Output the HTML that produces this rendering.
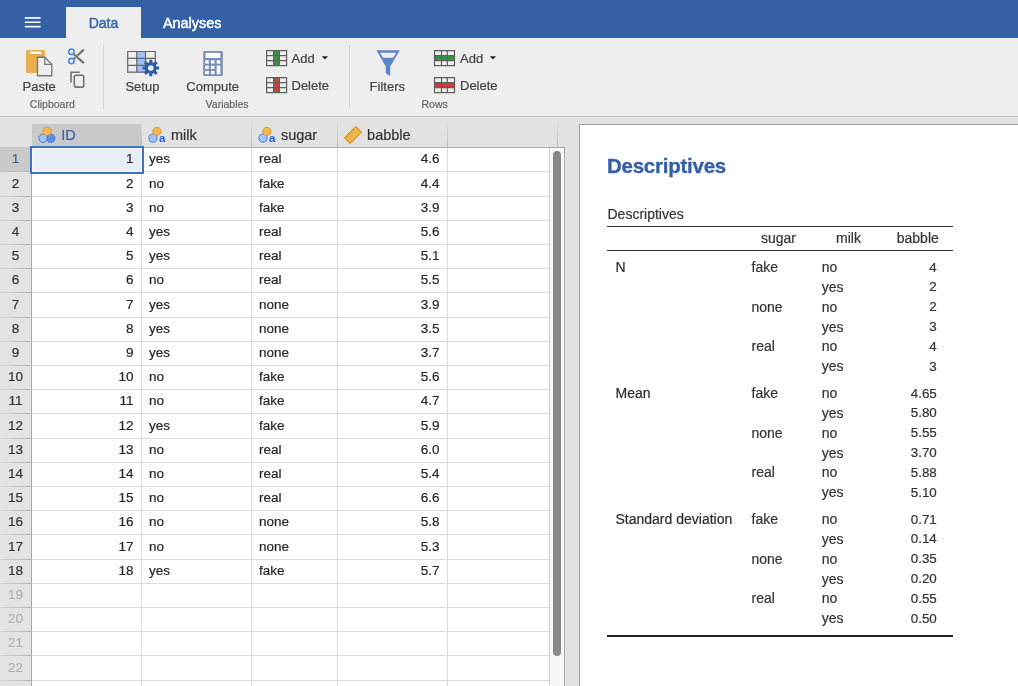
<!DOCTYPE html>
<html><head><meta charset="utf-8"><style>
html,body{margin:0;padding:0;width:1018px;height:686px;overflow:hidden;background:#e2e2e2;font-family:"Liberation Sans", sans-serif;}
.b{position:absolute;}
.t{position:absolute;line-height:1;white-space:nowrap;-webkit-text-stroke:0.2px currentColor;}
svg{position:absolute;left:0;top:0;will-change:transform;}
</style></head><body>
<div class="b" style="left:0px;top:0px;width:1018px;height:38px;background:#3461a5"></div><div class="b" style="left:66px;top:7px;width:75px;height:31px;background:#eeeeee"></div><div class="b" style="left:0px;top:38px;width:1018px;height:78px;background:#eeeeee"></div><div class="b" style="left:0px;top:116px;width:1018px;height:1px;background:#c4c4c4"></div><div class="b" style="left:0px;top:117px;width:1018px;height:569px;background:#e2e2e2"></div><div class="b" style="left:103px;top:45px;width:1px;height:64px;background:#d6d6d6"></div><div class="b" style="left:349px;top:45px;width:1px;height:64px;background:#d6d6d6"></div><div class="b" style="left:32px;top:124px;width:109px;height:23px;background:#c9c9c9"></div><div class="b" style="left:141px;top:124px;width:1px;height:23px;background:linear-gradient(to bottom, rgba(190,190,190,0.2), #b9b9b9)"></div><div class="b" style="left:251px;top:124px;width:1px;height:23px;background:linear-gradient(to bottom, rgba(190,190,190,0.2), #b9b9b9)"></div><div class="b" style="left:337px;top:124px;width:1px;height:23px;background:linear-gradient(to bottom, rgba(190,190,190,0.2), #b9b9b9)"></div><div class="b" style="left:447px;top:124px;width:1px;height:23px;background:linear-gradient(to bottom, rgba(190,190,190,0.2), #b9b9b9)"></div><div class="b" style="left:557px;top:124px;width:1px;height:23px;background:linear-gradient(to bottom, rgba(190,190,190,0.2), #b9b9b9)"></div><div class="b" style="left:32px;top:147px;width:517px;height:539px;background:#fff"></div><div class="b" style="left:0px;top:147px;width:31px;height:539px;background:#e3e3e3"></div><div class="b" style="left:0px;top:147px;width:31px;height:25px;background:#c9c9c9"></div><div class="b" style="left:31px;top:147px;width:1px;height:539px;background:#a9a9a9"></div><div class="b" style="left:32px;top:171px;width:517px;height:1px;background:#dadada"></div><div class="b" style="left:0px;top:171px;width:31px;height:1px;background:linear-gradient(to right, rgba(180,180,180,0.3), #b4b4b4)"></div><div class="b" style="left:32px;top:196px;width:517px;height:1px;background:#dadada"></div><div class="b" style="left:0px;top:196px;width:31px;height:1px;background:linear-gradient(to right, rgba(180,180,180,0.3), #b4b4b4)"></div><div class="b" style="left:32px;top:220px;width:517px;height:1px;background:#dadada"></div><div class="b" style="left:0px;top:220px;width:31px;height:1px;background:linear-gradient(to right, rgba(180,180,180,0.3), #b4b4b4)"></div><div class="b" style="left:32px;top:244px;width:517px;height:1px;background:#dadada"></div><div class="b" style="left:0px;top:244px;width:31px;height:1px;background:linear-gradient(to right, rgba(180,180,180,0.3), #b4b4b4)"></div><div class="b" style="left:32px;top:268px;width:517px;height:1px;background:#dadada"></div><div class="b" style="left:0px;top:268px;width:31px;height:1px;background:linear-gradient(to right, rgba(180,180,180,0.3), #b4b4b4)"></div><div class="b" style="left:32px;top:292px;width:517px;height:1px;background:#dadada"></div><div class="b" style="left:0px;top:292px;width:31px;height:1px;background:linear-gradient(to right, rgba(180,180,180,0.3), #b4b4b4)"></div><div class="b" style="left:32px;top:317px;width:517px;height:1px;background:#dadada"></div><div class="b" style="left:0px;top:317px;width:31px;height:1px;background:linear-gradient(to right, rgba(180,180,180,0.3), #b4b4b4)"></div><div class="b" style="left:32px;top:341px;width:517px;height:1px;background:#dadada"></div><div class="b" style="left:0px;top:341px;width:31px;height:1px;background:linear-gradient(to right, rgba(180,180,180,0.3), #b4b4b4)"></div><div class="b" style="left:32px;top:365px;width:517px;height:1px;background:#dadada"></div><div class="b" style="left:0px;top:365px;width:31px;height:1px;background:linear-gradient(to right, rgba(180,180,180,0.3), #b4b4b4)"></div><div class="b" style="left:32px;top:389px;width:517px;height:1px;background:#dadada"></div><div class="b" style="left:0px;top:389px;width:31px;height:1px;background:linear-gradient(to right, rgba(180,180,180,0.3), #b4b4b4)"></div><div class="b" style="left:32px;top:413px;width:517px;height:1px;background:#dadada"></div><div class="b" style="left:0px;top:413px;width:31px;height:1px;background:linear-gradient(to right, rgba(180,180,180,0.3), #b4b4b4)"></div><div class="b" style="left:32px;top:438px;width:517px;height:1px;background:#dadada"></div><div class="b" style="left:0px;top:438px;width:31px;height:1px;background:linear-gradient(to right, rgba(180,180,180,0.3), #b4b4b4)"></div><div class="b" style="left:32px;top:462px;width:517px;height:1px;background:#dadada"></div><div class="b" style="left:0px;top:462px;width:31px;height:1px;background:linear-gradient(to right, rgba(180,180,180,0.3), #b4b4b4)"></div><div class="b" style="left:32px;top:486px;width:517px;height:1px;background:#dadada"></div><div class="b" style="left:0px;top:486px;width:31px;height:1px;background:linear-gradient(to right, rgba(180,180,180,0.3), #b4b4b4)"></div><div class="b" style="left:32px;top:510px;width:517px;height:1px;background:#dadada"></div><div class="b" style="left:0px;top:510px;width:31px;height:1px;background:linear-gradient(to right, rgba(180,180,180,0.3), #b4b4b4)"></div><div class="b" style="left:32px;top:534px;width:517px;height:1px;background:#dadada"></div><div class="b" style="left:0px;top:534px;width:31px;height:1px;background:linear-gradient(to right, rgba(180,180,180,0.3), #b4b4b4)"></div><div class="b" style="left:32px;top:559px;width:517px;height:1px;background:#dadada"></div><div class="b" style="left:0px;top:559px;width:31px;height:1px;background:linear-gradient(to right, rgba(180,180,180,0.3), #b4b4b4)"></div><div class="b" style="left:32px;top:583px;width:517px;height:1px;background:#dadada"></div><div class="b" style="left:0px;top:583px;width:31px;height:1px;background:linear-gradient(to right, rgba(180,180,180,0.3), #b4b4b4)"></div><div class="b" style="left:32px;top:607px;width:517px;height:1px;background:#dadada"></div><div class="b" style="left:0px;top:607px;width:31px;height:1px;background:linear-gradient(to right, rgba(180,180,180,0.3), #b4b4b4)"></div><div class="b" style="left:32px;top:631px;width:517px;height:1px;background:#dadada"></div><div class="b" style="left:0px;top:631px;width:31px;height:1px;background:linear-gradient(to right, rgba(180,180,180,0.3), #b4b4b4)"></div><div class="b" style="left:32px;top:655px;width:517px;height:1px;background:#dadada"></div><div class="b" style="left:0px;top:655px;width:31px;height:1px;background:linear-gradient(to right, rgba(180,180,180,0.3), #b4b4b4)"></div><div class="b" style="left:32px;top:680px;width:517px;height:1px;background:#dadada"></div><div class="b" style="left:0px;top:680px;width:31px;height:1px;background:linear-gradient(to right, rgba(180,180,180,0.3), #b4b4b4)"></div><div class="b" style="left:32px;top:704px;width:517px;height:1px;background:#dadada"></div><div class="b" style="left:0px;top:704px;width:31px;height:1px;background:linear-gradient(to right, rgba(180,180,180,0.3), #b4b4b4)"></div><div class="b" style="left:141px;top:147px;width:1px;height:539px;background:#dadada"></div><div class="b" style="left:251px;top:147px;width:1px;height:539px;background:#dadada"></div><div class="b" style="left:337px;top:147px;width:1px;height:539px;background:#dadada"></div><div class="b" style="left:447px;top:147px;width:1px;height:539px;background:#dadada"></div><div class="b" style="left:32px;top:147px;width:533px;height:1px;background:#aaaaaa"></div><div class="b" style="left:30px;top:146px;width:114px;height:28px;border:2px solid #3d72c4;box-sizing:border-box;background:#e8eef7;box-shadow:inset 0 0 0 1px #fff"></div><div class="b" style="left:549px;top:147px;width:16px;height:539px;background:#f7f7f7;border-left:1px solid #cdcdcd;border-right:1px solid #a8a8a8;border-top:1px solid #aaa;box-sizing:border-box"></div><div class="b" style="left:553px;top:151px;width:8px;height:505px;background:#888;border-radius:4px"></div><div class="b" style="left:579px;top:124px;width:439px;height:562px;background:#fff;border-left:1px solid #9d9d9d;border-top:1px solid #9d9d9d;box-sizing:border-box"></div><div class="b" style="left:607px;top:226px;width:346px;height:1px;background:#333"></div><div class="b" style="left:607px;top:250px;width:346px;height:1px;background:#333"></div><div class="b" style="left:607px;top:634.5px;width:346px;height:2px;background:#222"></div>
<svg width="1018" height="686" viewBox="0 0 1018 686"><rect x="24.8" y="17.1" width="15.8" height="1.7" rx="0.5" fill="#fff"/><rect x="24.8" y="21.4" width="15.8" height="1.7" rx="0.5" fill="#fff"/><rect x="24.8" y="25.7" width="15.8" height="1.7" rx="0.5" fill="#fff"/><rect x="26" y="50" width="19" height="23" rx="1.5" fill="#e9ae4d"/><rect x="30" y="51.6" width="11.3" height="2.2" fill="#fff"/><path d="M37.5 57.3 H44.8 L51.8 64.3 V75.8 H37.5 Z" fill="#efefef" stroke="#7a7a7a" stroke-width="1.4"/><path d="M44.8 57.3 V64.3 H51.8" fill="none" stroke="#7a7a7a" stroke-width="1.3"/><path d="M73.6 59 L83.8 49.6" stroke="#727272" stroke-width="2.2" fill="none"/><path d="M73.6 54 L83.8 63.1" stroke="#eeeeee" stroke-width="2.9" fill="none"/><path d="M73.6 54 L83.8 63.1" stroke="#727272" stroke-width="2.2" fill="none"/><circle cx="71.4" cy="51.7" r="2.7" fill="none" stroke="#4a86e2" stroke-width="1.6"/><circle cx="71.4" cy="61.1" r="2.7" fill="none" stroke="#4a86e2" stroke-width="1.6"/><path d="M71 82.5 V72.3 H79.8" fill="none" stroke="#727272" stroke-width="1.6"/><rect x="74.3" y="75.2" width="9.4" height="11.9" rx="1.3" fill="none" stroke="#727272" stroke-width="1.6"/><rect x="136.8" y="51" width="8.7" height="21.7" fill="#9ec0f4"/><path d="M127.7 51.5 H155.3 V72.2 H127.7 Z M136.8 51.5 V72.2 M145.5 51.5 V72.2 M127.7 58.4 H155.3 M127.7 65.3 H155.3" fill="none" stroke="#666" stroke-width="1.2"/><rect x="-1.5" y="-8.3" width="3.0" height="4" transform="translate(150.8 68.0) rotate(0)" fill="#2c5ea3"/><rect x="-1.5" y="-8.3" width="3.0" height="4" transform="translate(150.8 68.0) rotate(45)" fill="#2c5ea3"/><rect x="-1.5" y="-8.3" width="3.0" height="4" transform="translate(150.8 68.0) rotate(90)" fill="#2c5ea3"/><rect x="-1.5" y="-8.3" width="3.0" height="4" transform="translate(150.8 68.0) rotate(135)" fill="#2c5ea3"/><rect x="-1.5" y="-8.3" width="3.0" height="4" transform="translate(150.8 68.0) rotate(180)" fill="#2c5ea3"/><rect x="-1.5" y="-8.3" width="3.0" height="4" transform="translate(150.8 68.0) rotate(225)" fill="#2c5ea3"/><rect x="-1.5" y="-8.3" width="3.0" height="4" transform="translate(150.8 68.0) rotate(270)" fill="#2c5ea3"/><rect x="-1.5" y="-8.3" width="3.0" height="4" transform="translate(150.8 68.0) rotate(315)" fill="#2c5ea3"/><circle cx="150.8" cy="68.0" r="5.9" fill="#2c5ea3"/><circle cx="150.8" cy="68.0" r="2.8" fill="#eee"/><rect x="203.2" y="51" width="19.6" height="24.9" rx="1" fill="#7a8fb7"/><rect x="205.5" y="52.9" width="14.8" height="5.1" fill="#fff"/><rect x="205.2" y="60.3" width="3.6" height="3.3" fill="#fff"/><rect x="210.9" y="60.3" width="3.6" height="3.3" fill="#fff"/><rect x="216.7" y="60.3" width="3.6" height="3.3" fill="#fff"/><rect x="205.2" y="65.7" width="3.6" height="3.3" fill="#fff"/><rect x="210.9" y="65.7" width="3.6" height="3.3" fill="#fff"/><rect x="205.2" y="70.9" width="3.6" height="3.3" fill="#fff"/><rect x="210.9" y="70.9" width="3.6" height="3.3" fill="#fff"/><rect x="216.7" y="65.7" width="3.6" height="8.5" fill="#fff"/><rect x="273.60" y="50.6" width="5.80" height="15" fill="#2f9a37"/><path d="M266.6 50.6 H286.6 V65.6 H266.6 Z M273.60 50.6 V65.6 M279.40 50.6 V65.6 M266.6 55.55 H286.6 M266.6 60.65 H286.6" fill="none" stroke="#5f5f5f" stroke-width="1.2"/><rect x="273.60" y="77.6" width="5.80" height="15" fill="#c4483c"/><path d="M266.6 77.6 H286.6 V92.6 H266.6 Z M273.60 77.6 V92.6 M279.40 77.6 V92.6 M266.6 82.55 H286.6 M266.6 87.65 H286.6" fill="none" stroke="#5f5f5f" stroke-width="1.2"/><rect x="434.5" y="55.55" width="20" height="5.10" fill="#2f9a37"/><path d="M434.5 50.6 H454.5 V65.6 H434.5 Z M441.50 50.6 V65.6 M447.30 50.6 V65.6 M434.5 55.55 H454.5 M434.5 60.65 H454.5" fill="none" stroke="#5f5f5f" stroke-width="1.2"/><rect x="434.5" y="82.55" width="20" height="5.10" fill="#cf3b36"/><path d="M434.5 77.6 H454.5 V92.6 H434.5 Z M441.50 77.6 V92.6 M447.30 77.6 V92.6 M434.5 82.55 H454.5 M434.5 87.65 H454.5" fill="none" stroke="#5f5f5f" stroke-width="1.2"/><path d="M321.8 56.3 H328 L324.9 59.5 Z" fill="#222"/><path d="M489.8 56.3 H496 L492.9 59.5 Z" fill="#222"/><path d="M376.4 50.2 H399.8 L390.2 66.4 V76.1 L385.8 73.3 V66.4 Z" fill="#5a87cc"/><path d="M380 52.8 H396.2 L393.2 57.8 H383 Z" fill="#efefef"/><circle cx="50.8" cy="138.3" r="4.2" fill="#5d8fe6" stroke="#3b78e2" stroke-width="0.9"/><circle cx="43" cy="138.3" r="4.2" fill="#a6c4f7" stroke="#3b78e2" stroke-width="0.9"/><circle cx="47" cy="131.4" r="4.3" fill="#f0b752" stroke="#d9992e" stroke-width="0.9"/><circle cx="153" cy="138.1" r="4.1" fill="#a6c4f7" stroke="#3b78e2" stroke-width="0.9"/><circle cx="156.9" cy="131.4" r="4.2" fill="#f0b752" stroke="#d9992e" stroke-width="0.9"/><text x="159.1" y="141.8" font-family="Liberation Sans, sans-serif" font-weight="bold" font-size="11.5" fill="#1f5fe0">a</text><circle cx="263" cy="138.1" r="4.1" fill="#a6c4f7" stroke="#3b78e2" stroke-width="0.9"/><circle cx="266.9" cy="131.4" r="4.2" fill="#f0b752" stroke="#d9992e" stroke-width="0.9"/><text x="269.1" y="141.8" font-family="Liberation Sans, sans-serif" font-weight="bold" font-size="11.5" fill="#1f5fe0">a</text><g transform="translate(353 135) rotate(-45)"><rect x="-8" y="-4" width="16" height="8" fill="#f0b550" stroke="#dc9420" stroke-width="1.1"/><path d="M-5 -4 V-1.5 M-2 -4 V-2.3 M1 -4 V-1.5 M4 -4 V-2.3" stroke="#d08e20" stroke-width="0.9"/></g></svg>
<div style="position:absolute;left:0;top:0;width:1018px;height:686px;will-change:transform"><div class="t" style="left:-96.50px;width:400px;text-align:center;top:16.15px;font-size:14px;color:#3a66ab;font-weight:normal;-webkit-text-stroke:0.45px #3a66ab;">Data</div><div class="t" style="left:163.00px;top:15.81px;font-size:14.4px;color:#fff;font-weight:normal;-webkit-text-stroke:0.45px #fff;">Analyses</div><div class="t" style="left:22.60px;top:80.00px;font-size:13px;color:#424242;font-weight:normal;">Paste</div><div class="t" style="left:29.80px;top:99.11px;font-size:10.5px;color:#666666;font-weight:normal;">Clipboard</div><div class="t" style="left:125.40px;top:80.00px;font-size:13px;color:#424242;font-weight:normal;">Setup</div><div class="t" style="left:186.30px;top:80.00px;font-size:13px;color:#424242;font-weight:normal;">Compute</div><div class="t" style="left:205.60px;top:99.11px;font-size:10.5px;color:#666666;font-weight:normal;">Variables</div><div class="t" style="left:291.50px;top:51.80px;font-size:13px;color:#424242;font-weight:normal;">Add</div><div class="t" style="left:291.50px;top:79.00px;font-size:13px;color:#424242;font-weight:normal;">Delete</div><div class="t" style="left:369.60px;top:80.00px;font-size:13px;color:#424242;font-weight:normal;">Filters</div><div class="t" style="left:460.00px;top:51.80px;font-size:13px;color:#424242;font-weight:normal;">Add</div><div class="t" style="left:460.00px;top:79.00px;font-size:13px;color:#424242;font-weight:normal;">Delete</div><div class="t" style="left:421.50px;top:99.11px;font-size:10.5px;color:#666666;font-weight:normal;">Rows</div><div class="t" style="left:-184.00px;width:400px;text-align:center;top:152.47px;font-size:13.5px;color:#3a66ab;font-weight:normal;width:31px;left:0px;">1</div><div class="t" style="left:-184.00px;width:400px;text-align:center;top:176.67px;font-size:13.5px;color:#333;font-weight:normal;width:31px;left:0px;">2</div><div class="t" style="left:-184.00px;width:400px;text-align:center;top:200.87px;font-size:13.5px;color:#333;font-weight:normal;width:31px;left:0px;">3</div><div class="t" style="left:-184.00px;width:400px;text-align:center;top:225.07px;font-size:13.5px;color:#333;font-weight:normal;width:31px;left:0px;">4</div><div class="t" style="left:-184.00px;width:400px;text-align:center;top:249.27px;font-size:13.5px;color:#333;font-weight:normal;width:31px;left:0px;">5</div><div class="t" style="left:-184.00px;width:400px;text-align:center;top:273.47px;font-size:13.5px;color:#333;font-weight:normal;width:31px;left:0px;">6</div><div class="t" style="left:-184.00px;width:400px;text-align:center;top:297.67px;font-size:13.5px;color:#333;font-weight:normal;width:31px;left:0px;">7</div><div class="t" style="left:-184.00px;width:400px;text-align:center;top:321.87px;font-size:13.5px;color:#333;font-weight:normal;width:31px;left:0px;">8</div><div class="t" style="left:-184.00px;width:400px;text-align:center;top:346.07px;font-size:13.5px;color:#333;font-weight:normal;width:31px;left:0px;">9</div><div class="t" style="left:-184.00px;width:400px;text-align:center;top:370.27px;font-size:13.5px;color:#333;font-weight:normal;width:31px;left:0px;">10</div><div class="t" style="left:-184.00px;width:400px;text-align:center;top:394.47px;font-size:13.5px;color:#333;font-weight:normal;width:31px;left:0px;">11</div><div class="t" style="left:-184.00px;width:400px;text-align:center;top:418.67px;font-size:13.5px;color:#333;font-weight:normal;width:31px;left:0px;">12</div><div class="t" style="left:-184.00px;width:400px;text-align:center;top:442.87px;font-size:13.5px;color:#333;font-weight:normal;width:31px;left:0px;">13</div><div class="t" style="left:-184.00px;width:400px;text-align:center;top:467.07px;font-size:13.5px;color:#333;font-weight:normal;width:31px;left:0px;">14</div><div class="t" style="left:-184.00px;width:400px;text-align:center;top:491.27px;font-size:13.5px;color:#333;font-weight:normal;width:31px;left:0px;">15</div><div class="t" style="left:-184.00px;width:400px;text-align:center;top:515.47px;font-size:13.5px;color:#333;font-weight:normal;width:31px;left:0px;">16</div><div class="t" style="left:-184.00px;width:400px;text-align:center;top:539.67px;font-size:13.5px;color:#333;font-weight:normal;width:31px;left:0px;">17</div><div class="t" style="left:-184.00px;width:400px;text-align:center;top:563.87px;font-size:13.5px;color:#333;font-weight:normal;width:31px;left:0px;">18</div><div class="t" style="left:-184.00px;width:400px;text-align:center;top:588.07px;font-size:13.5px;color:#b3b3b3;font-weight:normal;width:31px;left:0px;">19</div><div class="t" style="left:-184.00px;width:400px;text-align:center;top:612.27px;font-size:13.5px;color:#b3b3b3;font-weight:normal;width:31px;left:0px;">20</div><div class="t" style="left:-184.00px;width:400px;text-align:center;top:636.47px;font-size:13.5px;color:#b3b3b3;font-weight:normal;width:31px;left:0px;">21</div><div class="t" style="left:-184.00px;width:400px;text-align:center;top:660.67px;font-size:13.5px;color:#b3b3b3;font-weight:normal;width:31px;left:0px;">22</div><div class="t" style="right:884.60px;top:152.47px;font-size:13.5px;color:#262626;font-weight:normal;">1</div><div class="t" style="left:149.00px;top:152.47px;font-size:13.5px;color:#262626;font-weight:normal;">yes</div><div class="t" style="left:258.90px;top:152.47px;font-size:13.5px;color:#262626;font-weight:normal;">real</div><div class="t" style="right:578.40px;top:152.47px;font-size:13.5px;color:#262626;font-weight:normal;">4.6</div><div class="t" style="right:884.60px;top:176.67px;font-size:13.5px;color:#262626;font-weight:normal;">2</div><div class="t" style="left:149.00px;top:176.67px;font-size:13.5px;color:#262626;font-weight:normal;">no</div><div class="t" style="left:258.90px;top:176.67px;font-size:13.5px;color:#262626;font-weight:normal;">fake</div><div class="t" style="right:578.40px;top:176.67px;font-size:13.5px;color:#262626;font-weight:normal;">4.4</div><div class="t" style="right:884.60px;top:200.87px;font-size:13.5px;color:#262626;font-weight:normal;">3</div><div class="t" style="left:149.00px;top:200.87px;font-size:13.5px;color:#262626;font-weight:normal;">no</div><div class="t" style="left:258.90px;top:200.87px;font-size:13.5px;color:#262626;font-weight:normal;">fake</div><div class="t" style="right:578.40px;top:200.87px;font-size:13.5px;color:#262626;font-weight:normal;">3.9</div><div class="t" style="right:884.60px;top:225.07px;font-size:13.5px;color:#262626;font-weight:normal;">4</div><div class="t" style="left:149.00px;top:225.07px;font-size:13.5px;color:#262626;font-weight:normal;">yes</div><div class="t" style="left:258.90px;top:225.07px;font-size:13.5px;color:#262626;font-weight:normal;">real</div><div class="t" style="right:578.40px;top:225.07px;font-size:13.5px;color:#262626;font-weight:normal;">5.6</div><div class="t" style="right:884.60px;top:249.27px;font-size:13.5px;color:#262626;font-weight:normal;">5</div><div class="t" style="left:149.00px;top:249.27px;font-size:13.5px;color:#262626;font-weight:normal;">yes</div><div class="t" style="left:258.90px;top:249.27px;font-size:13.5px;color:#262626;font-weight:normal;">real</div><div class="t" style="right:578.40px;top:249.27px;font-size:13.5px;color:#262626;font-weight:normal;">5.1</div><div class="t" style="right:884.60px;top:273.47px;font-size:13.5px;color:#262626;font-weight:normal;">6</div><div class="t" style="left:149.00px;top:273.47px;font-size:13.5px;color:#262626;font-weight:normal;">no</div><div class="t" style="left:258.90px;top:273.47px;font-size:13.5px;color:#262626;font-weight:normal;">real</div><div class="t" style="right:578.40px;top:273.47px;font-size:13.5px;color:#262626;font-weight:normal;">5.5</div><div class="t" style="right:884.60px;top:297.67px;font-size:13.5px;color:#262626;font-weight:normal;">7</div><div class="t" style="left:149.00px;top:297.67px;font-size:13.5px;color:#262626;font-weight:normal;">yes</div><div class="t" style="left:258.90px;top:297.67px;font-size:13.5px;color:#262626;font-weight:normal;">none</div><div class="t" style="right:578.40px;top:297.67px;font-size:13.5px;color:#262626;font-weight:normal;">3.9</div><div class="t" style="right:884.60px;top:321.87px;font-size:13.5px;color:#262626;font-weight:normal;">8</div><div class="t" style="left:149.00px;top:321.87px;font-size:13.5px;color:#262626;font-weight:normal;">yes</div><div class="t" style="left:258.90px;top:321.87px;font-size:13.5px;color:#262626;font-weight:normal;">none</div><div class="t" style="right:578.40px;top:321.87px;font-size:13.5px;color:#262626;font-weight:normal;">3.5</div><div class="t" style="right:884.60px;top:346.07px;font-size:13.5px;color:#262626;font-weight:normal;">9</div><div class="t" style="left:149.00px;top:346.07px;font-size:13.5px;color:#262626;font-weight:normal;">yes</div><div class="t" style="left:258.90px;top:346.07px;font-size:13.5px;color:#262626;font-weight:normal;">none</div><div class="t" style="right:578.40px;top:346.07px;font-size:13.5px;color:#262626;font-weight:normal;">3.7</div><div class="t" style="right:884.60px;top:370.27px;font-size:13.5px;color:#262626;font-weight:normal;">10</div><div class="t" style="left:149.00px;top:370.27px;font-size:13.5px;color:#262626;font-weight:normal;">no</div><div class="t" style="left:258.90px;top:370.27px;font-size:13.5px;color:#262626;font-weight:normal;">fake</div><div class="t" style="right:578.40px;top:370.27px;font-size:13.5px;color:#262626;font-weight:normal;">5.6</div><div class="t" style="right:884.60px;top:394.47px;font-size:13.5px;color:#262626;font-weight:normal;">11</div><div class="t" style="left:149.00px;top:394.47px;font-size:13.5px;color:#262626;font-weight:normal;">no</div><div class="t" style="left:258.90px;top:394.47px;font-size:13.5px;color:#262626;font-weight:normal;">fake</div><div class="t" style="right:578.40px;top:394.47px;font-size:13.5px;color:#262626;font-weight:normal;">4.7</div><div class="t" style="right:884.60px;top:418.67px;font-size:13.5px;color:#262626;font-weight:normal;">12</div><div class="t" style="left:149.00px;top:418.67px;font-size:13.5px;color:#262626;font-weight:normal;">yes</div><div class="t" style="left:258.90px;top:418.67px;font-size:13.5px;color:#262626;font-weight:normal;">fake</div><div class="t" style="right:578.40px;top:418.67px;font-size:13.5px;color:#262626;font-weight:normal;">5.9</div><div class="t" style="right:884.60px;top:442.87px;font-size:13.5px;color:#262626;font-weight:normal;">13</div><div class="t" style="left:149.00px;top:442.87px;font-size:13.5px;color:#262626;font-weight:normal;">no</div><div class="t" style="left:258.90px;top:442.87px;font-size:13.5px;color:#262626;font-weight:normal;">real</div><div class="t" style="right:578.40px;top:442.87px;font-size:13.5px;color:#262626;font-weight:normal;">6.0</div><div class="t" style="right:884.60px;top:467.07px;font-size:13.5px;color:#262626;font-weight:normal;">14</div><div class="t" style="left:149.00px;top:467.07px;font-size:13.5px;color:#262626;font-weight:normal;">no</div><div class="t" style="left:258.90px;top:467.07px;font-size:13.5px;color:#262626;font-weight:normal;">real</div><div class="t" style="right:578.40px;top:467.07px;font-size:13.5px;color:#262626;font-weight:normal;">5.4</div><div class="t" style="right:884.60px;top:491.27px;font-size:13.5px;color:#262626;font-weight:normal;">15</div><div class="t" style="left:149.00px;top:491.27px;font-size:13.5px;color:#262626;font-weight:normal;">no</div><div class="t" style="left:258.90px;top:491.27px;font-size:13.5px;color:#262626;font-weight:normal;">real</div><div class="t" style="right:578.40px;top:491.27px;font-size:13.5px;color:#262626;font-weight:normal;">6.6</div><div class="t" style="right:884.60px;top:515.47px;font-size:13.5px;color:#262626;font-weight:normal;">16</div><div class="t" style="left:149.00px;top:515.47px;font-size:13.5px;color:#262626;font-weight:normal;">no</div><div class="t" style="left:258.90px;top:515.47px;font-size:13.5px;color:#262626;font-weight:normal;">none</div><div class="t" style="right:578.40px;top:515.47px;font-size:13.5px;color:#262626;font-weight:normal;">5.8</div><div class="t" style="right:884.60px;top:539.67px;font-size:13.5px;color:#262626;font-weight:normal;">17</div><div class="t" style="left:149.00px;top:539.67px;font-size:13.5px;color:#262626;font-weight:normal;">no</div><div class="t" style="left:258.90px;top:539.67px;font-size:13.5px;color:#262626;font-weight:normal;">none</div><div class="t" style="right:578.40px;top:539.67px;font-size:13.5px;color:#262626;font-weight:normal;">5.3</div><div class="t" style="right:884.60px;top:563.87px;font-size:13.5px;color:#262626;font-weight:normal;">18</div><div class="t" style="left:149.00px;top:563.87px;font-size:13.5px;color:#262626;font-weight:normal;">yes</div><div class="t" style="left:258.90px;top:563.87px;font-size:13.5px;color:#262626;font-weight:normal;">fake</div><div class="t" style="right:578.40px;top:563.87px;font-size:13.5px;color:#262626;font-weight:normal;">5.7</div><div class="t" style="left:61.20px;top:127.93px;font-size:14.5px;color:#3a66ab;font-weight:normal;">ID</div><div class="t" style="left:170.90px;top:127.93px;font-size:14.5px;color:#333;font-weight:normal;">milk</div><div class="t" style="left:280.90px;top:127.93px;font-size:14.5px;color:#333;font-weight:normal;">sugar</div><div class="t" style="left:367.10px;top:127.93px;font-size:14.5px;color:#333;font-weight:normal;">babble</div><div class="t" style="left:607.00px;top:156.05px;font-size:20.5px;color:#3461a5;font-weight:bold;letter-spacing:-0.25px;-webkit-text-stroke:0.35px #3461a5;">Descriptives</div><div class="t" style="left:607.50px;top:206.75px;font-size:14px;color:#333;font-weight:normal;">Descriptives</div><div class="t" style="left:761.00px;top:230.75px;font-size:14px;color:#333;font-weight:normal;">sugar</div><div class="t" style="left:836.10px;top:230.75px;font-size:14px;color:#333;font-weight:normal;">milk</div><div class="t" style="right:79.20px;top:230.75px;font-size:14px;color:#333;font-weight:normal;">babble</div><div class="t" style="left:615.50px;top:260.15px;font-size:14px;color:#2b2b2b;font-weight:normal;">N</div><div class="t" style="left:751.50px;top:260.15px;font-size:14px;color:#333;font-weight:normal;">fake</div><div class="t" style="left:821.70px;top:260.15px;font-size:14px;color:#333;font-weight:normal;">no</div><div class="t" style="right:81.20px;top:260.66px;font-size:13.4px;color:#333;font-weight:normal;">4</div><div class="t" style="left:821.70px;top:279.98px;font-size:14px;color:#333;font-weight:normal;">yes</div><div class="t" style="right:81.20px;top:280.49px;font-size:13.4px;color:#333;font-weight:normal;">2</div><div class="t" style="left:751.50px;top:299.81px;font-size:14px;color:#333;font-weight:normal;">none</div><div class="t" style="left:821.70px;top:299.81px;font-size:14px;color:#333;font-weight:normal;">no</div><div class="t" style="right:81.20px;top:300.32px;font-size:13.4px;color:#333;font-weight:normal;">2</div><div class="t" style="left:821.70px;top:319.64px;font-size:14px;color:#333;font-weight:normal;">yes</div><div class="t" style="right:81.20px;top:320.15px;font-size:13.4px;color:#333;font-weight:normal;">3</div><div class="t" style="left:751.50px;top:339.47px;font-size:14px;color:#333;font-weight:normal;">real</div><div class="t" style="left:821.70px;top:339.47px;font-size:14px;color:#333;font-weight:normal;">no</div><div class="t" style="right:81.20px;top:339.98px;font-size:13.4px;color:#333;font-weight:normal;">4</div><div class="t" style="left:821.70px;top:359.30px;font-size:14px;color:#333;font-weight:normal;">yes</div><div class="t" style="right:81.20px;top:359.81px;font-size:13.4px;color:#333;font-weight:normal;">3</div><div class="t" style="left:615.50px;top:386.15px;font-size:14px;color:#2b2b2b;font-weight:normal;">Mean</div><div class="t" style="left:751.50px;top:386.15px;font-size:14px;color:#333;font-weight:normal;">fake</div><div class="t" style="left:821.70px;top:386.15px;font-size:14px;color:#333;font-weight:normal;">no</div><div class="t" style="right:81.20px;top:386.66px;font-size:13.4px;color:#333;font-weight:normal;">4.65</div><div class="t" style="left:821.70px;top:405.98px;font-size:14px;color:#333;font-weight:normal;">yes</div><div class="t" style="right:81.20px;top:406.49px;font-size:13.4px;color:#333;font-weight:normal;">5.80</div><div class="t" style="left:751.50px;top:425.81px;font-size:14px;color:#333;font-weight:normal;">none</div><div class="t" style="left:821.70px;top:425.81px;font-size:14px;color:#333;font-weight:normal;">no</div><div class="t" style="right:81.20px;top:426.32px;font-size:13.4px;color:#333;font-weight:normal;">5.55</div><div class="t" style="left:821.70px;top:445.64px;font-size:14px;color:#333;font-weight:normal;">yes</div><div class="t" style="right:81.20px;top:446.15px;font-size:13.4px;color:#333;font-weight:normal;">3.70</div><div class="t" style="left:751.50px;top:465.47px;font-size:14px;color:#333;font-weight:normal;">real</div><div class="t" style="left:821.70px;top:465.47px;font-size:14px;color:#333;font-weight:normal;">no</div><div class="t" style="right:81.20px;top:465.98px;font-size:13.4px;color:#333;font-weight:normal;">5.88</div><div class="t" style="left:821.70px;top:485.30px;font-size:14px;color:#333;font-weight:normal;">yes</div><div class="t" style="right:81.20px;top:485.81px;font-size:13.4px;color:#333;font-weight:normal;">5.10</div><div class="t" style="left:615.50px;top:512.15px;font-size:14px;color:#2b2b2b;font-weight:normal;">Standard deviation</div><div class="t" style="left:751.50px;top:512.15px;font-size:14px;color:#333;font-weight:normal;">fake</div><div class="t" style="left:821.70px;top:512.15px;font-size:14px;color:#333;font-weight:normal;">no</div><div class="t" style="right:81.20px;top:512.66px;font-size:13.4px;color:#333;font-weight:normal;">0.71</div><div class="t" style="left:821.70px;top:531.98px;font-size:14px;color:#333;font-weight:normal;">yes</div><div class="t" style="right:81.20px;top:532.49px;font-size:13.4px;color:#333;font-weight:normal;">0.14</div><div class="t" style="left:751.50px;top:551.81px;font-size:14px;color:#333;font-weight:normal;">none</div><div class="t" style="left:821.70px;top:551.81px;font-size:14px;color:#333;font-weight:normal;">no</div><div class="t" style="right:81.20px;top:552.32px;font-size:13.4px;color:#333;font-weight:normal;">0.35</div><div class="t" style="left:821.70px;top:571.64px;font-size:14px;color:#333;font-weight:normal;">yes</div><div class="t" style="right:81.20px;top:572.15px;font-size:13.4px;color:#333;font-weight:normal;">0.20</div><div class="t" style="left:751.50px;top:591.47px;font-size:14px;color:#333;font-weight:normal;">real</div><div class="t" style="left:821.70px;top:591.47px;font-size:14px;color:#333;font-weight:normal;">no</div><div class="t" style="right:81.20px;top:591.98px;font-size:13.4px;color:#333;font-weight:normal;">0.55</div><div class="t" style="left:821.70px;top:611.30px;font-size:14px;color:#333;font-weight:normal;">yes</div><div class="t" style="right:81.20px;top:611.81px;font-size:13.4px;color:#333;font-weight:normal;">0.50</div></div>
</body></html>
